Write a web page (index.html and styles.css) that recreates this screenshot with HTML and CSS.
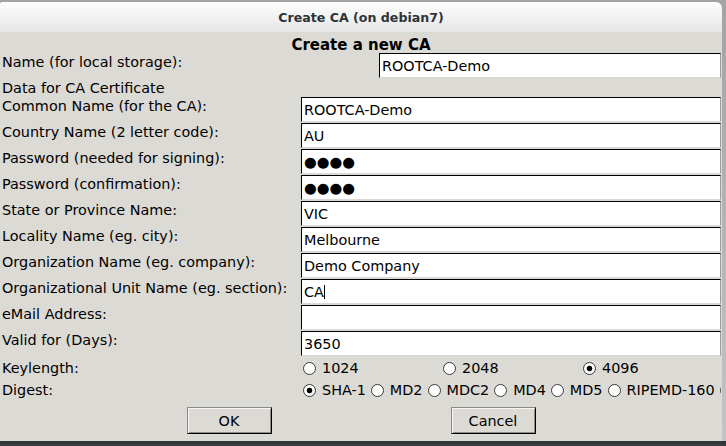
FILE: index.html
```html
<!DOCTYPE html>
<html>
<head>
<meta charset="utf-8">
<title>Create CA (on debian7)</title>
<link rel="stylesheet" href="styles.css">
</head>
<body>
<div class="screen">
  <div class="window">
    <div class="titlebar">Create CA (on debian7)</div>
    <div class="content">
      <div class="heading">Create a new CA</div>
      <div class="name-row">
        <div class="lbl">Name (for local storage):</div>
        <div class="entry">ROOTCA-Demo</div>
      </div>
      <div class="section-lbl">Data for CA Certificate</div>
      <div class="form">
        <div class="lbl">Common Name (for the CA):</div>
        <div class="entry">ROOTCA-Demo</div>
        <div class="lbl">Country Name (2 letter code):</div>
        <div class="entry">AU</div>
        <div class="lbl">Password (needed for signing):</div>
        <div class="entry dots">●●●●</div>
        <div class="lbl">Password (confirmation):</div>
        <div class="entry dots">●●●●</div>
        <div class="lbl">State or Province Name:</div>
        <div class="entry">VIC</div>
        <div class="lbl">Locality Name (eg. city):</div>
        <div class="entry">Melbourne</div>
        <div class="lbl">Organization Name (eg. company):</div>
        <div class="entry">Demo Company</div>
        <div class="lbl">Organizational Unit Name (eg. section):</div>
        <div class="entry"><span class="caret">CA</span></div>
        <div class="lbl">eMail Address:</div>
        <div class="entry"></div>
        <div class="lbl">Valid for (Days):</div>
        <div class="entry">3650</div>
        <div class="lbl mid">Keylength:</div>
        <div class="keylen">
          <span class="radio">1024</span>
          <span class="radio">2048</span>
          <span class="radio on">4096</span>
        </div>
        <div class="lbl mid">Digest:</div>
        <div class="digest">
          <span class="radio on">SHA-1</span>
          <span class="radio">MD2</span>
          <span class="radio">MDC2</span>
          <span class="radio">MD4</span>
          <span class="radio">MD5</span>
          <span class="radio">RIPEMD-160</span>
          <span class="radio"></span>
        </div>
      </div>
      <div class="buttons">
        <button class="btn">OK</button>
        <button class="btn">Cancel</button>
      </div>
    </div>
  </div>
</div>
</body>
</html>
```

FILE: styles.css
```css
html, body {
  margin: 0;
  padding: 0;
}
body {
  width: 726px;
  height: 446px;
  overflow: hidden;
  font-family: "DejaVu Sans", sans-serif;
}
.screen {
  width: 726px;
  height: 446px;
  padding-top: 2px;
  box-sizing: border-box;
  background: linear-gradient(to bottom, #a3a3a3 0, #c4c4c4 441px, #2e3135 441px, #3a3e43 446px);
}
.window {
  width: 722px;
  height: 439px;
  display: flex;
  flex-direction: column;
  overflow: hidden;
}
.titlebar {
  height: 30px;
  flex: none;
  background: linear-gradient(to bottom, #fdfdfd, #e6e6e6);
  border-radius: 2px 6px 0 0;
  text-align: center;
  font-weight: bold;
  font-size: 12.6px;
  line-height: 31px;
  color: #2e3436;
}
.content {
  flex: 1;
  background: #dcdad5;
  color: #000;
  font-size: 14.4px;
}
.heading {
  height: 21px;
  box-sizing: border-box;
  padding-top: 5px;
  line-height: 17px;
  font-size: 15px;
  font-weight: bold;
  text-align: center;
}
.name-row {
  display: grid;
  grid-template-columns: 379px 342px;
  height: 26px;
}
.lbl {
  padding-left: 2px;
  padding-top: 3px;
  line-height: 13px;
  white-space: nowrap;
  align-self: start;
}
.lbl.mid {
  align-self: center;
  padding-top: 0;
  line-height: 15px;
}
.section-lbl {
  height: 18px;
  box-sizing: border-box;
  padding: 3px 0 0 2px;
  line-height: 13px;
}
.form {
  display: grid;
  grid-template-columns: 301px 420px;
  grid-template-rows: repeat(10, 26px) 23px 21px;
}
.entry {
  height: 25px;
  box-sizing: border-box;
  background: #fff;
  border-style: solid;
  border-width: 1px;
  border-color: #000 #9d9c98 #d9d8d4 #000;
  padding-left: 2px;
  line-height: 24px;
  white-space: nowrap;
  overflow: hidden;
}
.dots {
  font-size: 14.6px;
  letter-spacing: 0;
}
.caret {
  display: inline-block;
  border-right: 1px solid #000;
  line-height: 14px;
  padding-right: 0;
}
.keylen {
  display: grid;
  grid-template-columns: repeat(3, 140px);
  align-items: center;
}
.keylen .radio {
  padding-left: 2px;
}
.digest {
  display: flex;
  align-items: center;
  padding-left: 2px;
  white-space: nowrap;
  overflow: hidden;
}
.digest .radio {
  margin-right: 5px;
  flex: none;
}
.radio {
  display: inline-flex;
  align-items: center;
  gap: 6px;
  line-height: 15px;
}
.radio::before {
  content: "";
  width: 13px;
  height: 13px;
  flex: none;
  box-sizing: border-box;
  border-radius: 50%;
  border: 1px solid #3a3a3a;
  background: #fff;
}
.radio.on::before {
  background: radial-gradient(circle, #000 0, #000 2.4px, #fff 3.2px);
}
.buttons {
  display: flex;
  justify-content: center;
  gap: 179px;
  padding-top: 6px;
}
.btn {
  width: 85px;
  height: 27px;
  margin: 0;
  padding: 0;
  box-sizing: border-box;
  background: #dcdad5;
  border: 1px solid;
  border-color: #8a8a88 #000 #000 #8a8a88;
  box-shadow: inset 1px 1px #f6f5f3, inset -1px -1px #8f8d88;
  font-family: "DejaVu Sans", sans-serif;
  font-size: 14.4px;
  color: #000;
}
```
